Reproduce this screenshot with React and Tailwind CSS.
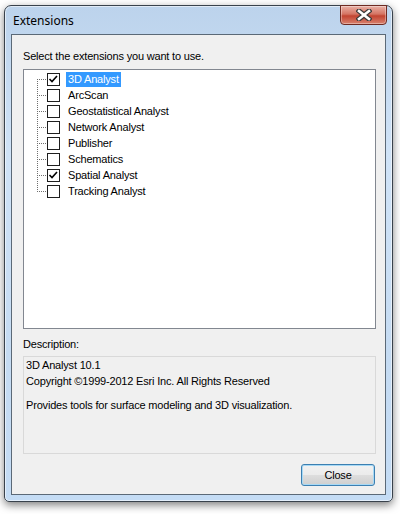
import React from 'react';

const items = [
    { label: '3D Analyst', checked: true, selected: true },
    { label: 'ArcScan' },
    { label: 'Geostatistical Analyst' },
    { label: 'Network Analyst' },
    { label: 'Publisher' },
    { label: 'Schematics' },
    { label: 'Spatial Analyst', checked: true },
    { label: 'Tracking Analyst' },
];

const TreeLines = ({ first, last }) => (
    <svg width="10" height="16" className="shrink-0">
        <line x1="0.5" y1={first ? 8 : 0} x2="0.5" y2={last ? 9 : 16} stroke="#6e6e6e" strokeDasharray="1 1" />
        <line x1="0" y1="8.5" x2="10" y2="8.5" stroke="#6e6e6e" strokeDasharray="1 1" />
    </svg>
);

const CheckBox = ({ checked }) => (
    <div className="w-[13px] h-[13px] shrink-0 border border-[#1e1e1e] bg-white flex items-center justify-center">
        {checked && (
            <svg width="11" height="11" viewBox="0 0 11 11">
                <polyline points="1.5,5 4,7.5 9,2" fill="none" stroke="#000" strokeWidth="1.6" />
            </svg>
        )}
    </div>
);

const App = () => {
    return (
        <div className="w-[400px] h-[514px] bg-white pl-[4px] pt-[5px] font-['Liberation_Sans',Arial,sans-serif] text-[11px] tracking-[-0.18px] text-black">
            {/* Window frame */}
            <div className="w-[389px] h-[497px] flex flex-col rounded-t-[7px] rounded-b-[5px] border border-[#39424c] bg-[linear-gradient(to_bottom,#bcd3ec,#d0e3f7_30%,#c5dbf2_70%,#c4dcf5)] shadow-[0_3px_9px_rgba(0,0,0,0.5),inset_0_0_0_1px_rgba(255,255,255,0.55)]">
                {/* Title bar */}
                <div className="h-[28px] flex items-start justify-between pl-[8px] pr-[5px]">
                    <span className="pt-[7px] leading-[16px] text-[12px] tracking-normal font-['Noto_Sans',sans-serif] text-black">Extensions</span>
                    <div className="w-[47px] h-[20px] mt-[-1px] rounded-b-[4px] border border-[#6e2a22] bg-[linear-gradient(to_bottom,#eab1a6,#d47463_45%,#c24431_55%,#d9826f)] shadow-[inset_0_0_0_1px_rgba(255,255,255,0.35)] flex items-center justify-center">
                        <svg width="16" height="12" viewBox="0 0 16 12">
                            <path d="M3 2 L13 10 M13 2 L3 10" stroke="#3a3a3a" strokeWidth="5" strokeLinecap="square" />
                            <path d="M3 2 L13 10 M13 2 L3 10" stroke="#ffffff" strokeWidth="2.6" strokeLinecap="square" />
                        </svg>
                    </div>
                </div>

                {/* Client area */}
                <div className="mx-[6px] h-[461px] border border-[#5b6977] bg-[#f0f0f0] flex flex-col pl-[11px] pr-[9px] pt-[13px]">
                    <p className="leading-[16px]">Select the extensions you want to use.</p>

                    {/* Tree list */}
                    <div className="mt-[5px] w-[353px] h-[260px] shrink-0 border border-[#828790] bg-white pt-[1px] pl-[13px]">
                        {items.map((item, i) => (
                            <div key={item.label} className="h-[16px] flex items-center">
                                <TreeLines first={i === 0} last={i === items.length - 1} />
                                <CheckBox checked={item.checked} />
                                <span className={`ml-[6px] px-[2px] leading-[15px] ${item.selected ? 'bg-[#3399ff] text-white' : ''}`}>
                                    {item.label}
                                </span>
                            </div>
                        ))}
                    </div>

                    <p className="mt-[7px] leading-[16px]">Description:</p>

                    {/* Description box */}
                    <div className="mt-[4px] w-[353px] h-[98px] shrink-0 border border-[#d9d9d9] bg-[#f0f0f0] pl-[2px] leading-[16px]">
                        <p>3D Analyst 10.1</p>
                        <p>Copyright ©1999-2012 Esri Inc. All Rights Reserved</p>
                        <p className="mt-[8px]">Provides tools for surface modeling and 3D visualization.</p>
                    </div>

                    <div className="mt-[10px] flex justify-end pr-[1px]">
                        <button className="w-[74px] h-[22px] rounded-[3px] border border-[#3c7fb1] bg-[linear-gradient(to_bottom,#f2f2f2,#ebebeb_48%,#dddddd_52%,#cfcfcf)] shadow-[inset_0_0_0_1px_#a7d9f5] text-[11px] leading-[16px] text-black">
                            Close
                        </button>
                    </div>
                </div>
            </div>
        </div>
    );
};

export default App;
